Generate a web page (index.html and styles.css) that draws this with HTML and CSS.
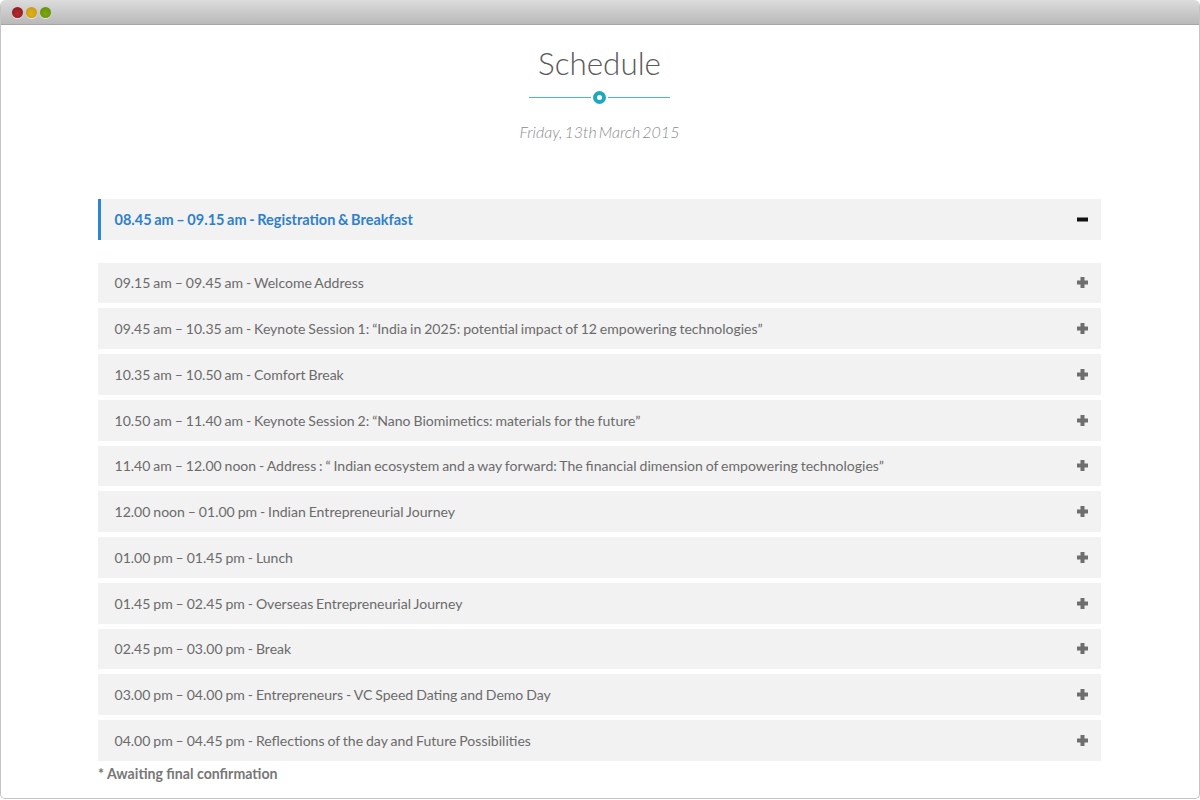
FILE: index.html
```html
<!DOCTYPE html>
<html lang="en">
<head>
<meta charset="utf-8">
<title>Schedule</title>
<link rel="stylesheet" href="styles.css">
</head>
<body>
<div class="window">
  <div class="titlebar">
    <span class="dot dot-red"></span>
    <span class="dot dot-yellow"></span>
    <span class="dot dot-green"></span>
  </div>
  <main class="content">
    <h1 class="title">Schedule</h1>
    <div class="divider"><span class="line"></span><span class="ring"></span><span class="line"></span></div>
    <p class="date">Friday, 13th March 2015</p>
    <div class="accordion">
      <div class="row row-active"><span>08.45 am – 09.15 am - Registration &amp; Breakfast</span><svg class="icon" viewBox="0 0 11 11"><rect x="0" y="3.5" width="11" height="4" fill="#111"/></svg></div>
      <div class="row"><span>09.15 am – 09.45 am - Welcome Address</span><svg class="icon" viewBox="0 0 11 11"><path d="M3.5 0h4v3.5H11v4H7.5V11h-4V7.5H0v-4h3.5z" fill="#6e6e6e"/></svg></div>
      <div class="row"><span>09.45 am – 10.35 am - Keynote Session 1: “India in 2025: potential impact of 12 empowering technologies”</span><svg class="icon" viewBox="0 0 11 11"><path d="M3.5 0h4v3.5H11v4H7.5V11h-4V7.5H0v-4h3.5z" fill="#6e6e6e"/></svg></div>
      <div class="row"><span>10.35 am – 10.50 am - Comfort Break</span><svg class="icon" viewBox="0 0 11 11"><path d="M3.5 0h4v3.5H11v4H7.5V11h-4V7.5H0v-4h3.5z" fill="#6e6e6e"/></svg></div>
      <div class="row"><span>10.50 am – 11.40 am - Keynote Session 2: “Nano Biomimetics: materials for the future”</span><svg class="icon" viewBox="0 0 11 11"><path d="M3.5 0h4v3.5H11v4H7.5V11h-4V7.5H0v-4h3.5z" fill="#6e6e6e"/></svg></div>
      <div class="row"><span>11.40 am – 12.00 noon - Address : “ Indian ecosystem and a way forward: The financial dimension of empowering technologies”</span><svg class="icon" viewBox="0 0 11 11"><path d="M3.5 0h4v3.5H11v4H7.5V11h-4V7.5H0v-4h3.5z" fill="#6e6e6e"/></svg></div>
      <div class="row"><span>12.00 noon – 01.00 pm - Indian Entrepreneurial Journey</span><svg class="icon" viewBox="0 0 11 11"><path d="M3.5 0h4v3.5H11v4H7.5V11h-4V7.5H0v-4h3.5z" fill="#6e6e6e"/></svg></div>
      <div class="row"><span>01.00 pm – 01.45 pm - Lunch</span><svg class="icon" viewBox="0 0 11 11"><path d="M3.5 0h4v3.5H11v4H7.5V11h-4V7.5H0v-4h3.5z" fill="#6e6e6e"/></svg></div>
      <div class="row"><span>01.45 pm – 02.45 pm - Overseas Entrepreneurial Journey</span><svg class="icon" viewBox="0 0 11 11"><path d="M3.5 0h4v3.5H11v4H7.5V11h-4V7.5H0v-4h3.5z" fill="#6e6e6e"/></svg></div>
      <div class="row"><span>02.45 pm – 03.00 pm - Break</span><svg class="icon" viewBox="0 0 11 11"><path d="M3.5 0h4v3.5H11v4H7.5V11h-4V7.5H0v-4h3.5z" fill="#6e6e6e"/></svg></div>
      <div class="row"><span>03.00 pm – 04.00 pm - Entrepreneurs - VC Speed Dating and Demo Day</span><svg class="icon" viewBox="0 0 11 11"><path d="M3.5 0h4v3.5H11v4H7.5V11h-4V7.5H0v-4h3.5z" fill="#6e6e6e"/></svg></div>
      <div class="row"><span>04.00 pm – 04.45 pm - Reflections of the day and Future Possibilities</span><svg class="icon" viewBox="0 0 11 11"><path d="M3.5 0h4v3.5H11v4H7.5V11h-4V7.5H0v-4h3.5z" fill="#6e6e6e"/></svg></div>
    </div>
    <p class="note">* Awaiting final confirmation</p>
  </main>
</div>
</body>
</html>
```

FILE: styles.css
```css
* { box-sizing: border-box; }
html, body { margin: 0; padding: 0; height: 100%; background: #fff; overflow: hidden; }
body { font-family: Lato, "Liberation Sans", sans-serif; color: #666; }
.window {
  width: 1200px;
  height: 799px;
  border: 1px solid #c4c4c4;
  border-top: 0;
  border-radius: 6px 6px 5px 5px;
  background: #fff;
  overflow: hidden;
}
.titlebar {
  height: 25px;
  margin: 0 -1px;
  padding: 7px 0 0 12px;
  display: flex;
  gap: 3px;
  background: linear-gradient(#dcdcdc, #b9b9b9);
  border-bottom: 1px solid #a6a6a6;
}
.dot { width: 11px; height: 11px; border-radius: 50%; box-shadow: 0 1px 0 rgba(255,255,255,.55); }
.dot-red { background: radial-gradient(circle at 50% 60%, #b32a30, #8a181e); }
.dot-yellow { background: radial-gradient(circle at 50% 60%, #e0b21a, #c49212); }
.dot-green { background: radial-gradient(circle at 50% 60%, #7ea811, #5f8b06); }
.content { padding: 0 98px 0 97px; }
.title {
  margin: 19px 0 0;
  text-align: center;
  font-size: 31.4px;
  line-height: 38px;
  font-weight: 300;
  color: #5a5a5a;
}
.divider { display: flex; align-items: center; justify-content: center; gap: 2px; margin-top: 8px; height: 14px; }
.line { width: 62px; height: 1px; background: #45b9d2; }
.ring { width: 13px; height: 13px; border-radius: 50%; border: 4px solid #1ba9c0; background: #fff; }
.date {
  margin: 16px 0 0;
  text-align: center;
  font-size: 16px;
  line-height: 24px;
  font-weight: 300;
  font-style: italic;
  word-spacing: -2px;
  color: #8c8c8c;
}
.accordion { margin-top: 55px; display: flex; flex-direction: column; gap: 5px; }
.row {
  height: 40.75px;
  padding: 0 13px 0 16.5px;
  display: flex;
  align-items: center;
  justify-content: space-between;
  background: #f2f2f2;
  font-size: 14.05px;
  word-spacing: -0.7px;
  color: #6b6b6b;
}
.row-active {
  height: 41px;
  margin-bottom: 17.6px;
  padding-left: 13.5px;
  border-left: 3px solid #2e86d3;
  font-size: 14.5px;
  font-weight: 700;
  word-spacing: -0.9px;
  color: #2f7fca;
}
.icon { width: 11px; height: 11px; flex: none; }
.note { margin: 4px 0 0; font-size: 14.15px; line-height: 18px; font-weight: 700; color: #777; }
```
